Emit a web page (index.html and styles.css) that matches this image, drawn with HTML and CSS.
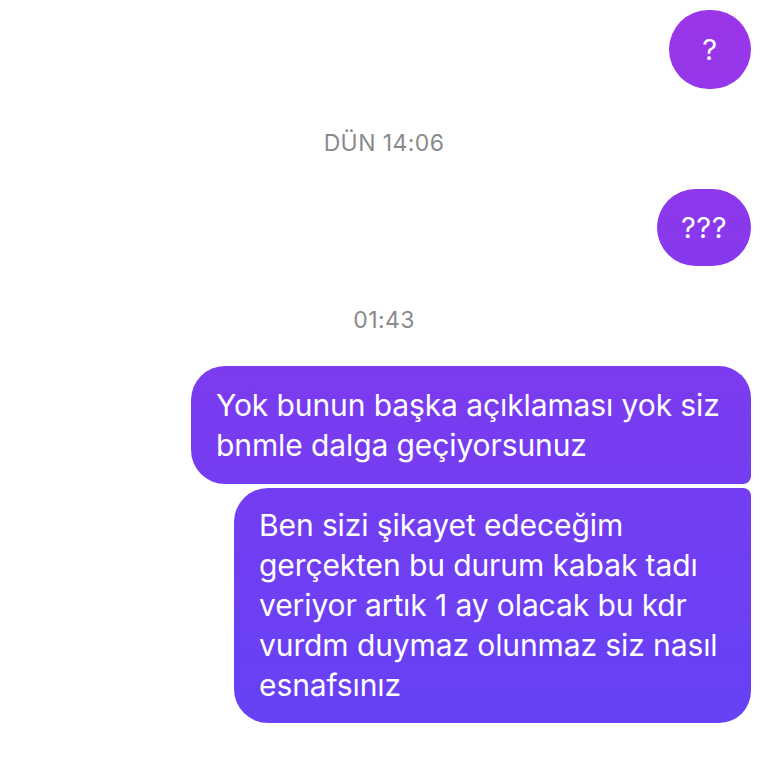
FILE: index.html
```html
<!DOCTYPE html>
<html lang="tr">
<head>
<meta charset="utf-8">
<link rel="stylesheet" href="styles.css">
</head>
<body>
<main class="thread">
  <div class="bubble round q1">?</div>
  <div class="stamp">DÜN 14:06</div>
  <div class="bubble round q3">???</div>
  <div class="stamp">01:43</div>
  <div class="group">
    <div class="bubble text first">Yok bunun başka açıklaması yok siz<br>bnmle dalga geçiyorsunuz</div>
    <div class="bubble text last">Ben sizi şikayet edeceğim<br>gerçekten bu durum kabak tadı<br>veriyor artık 1 ay olacak bu kdr<br>vurdm duymaz olunmaz siz nasıl<br>esnafsınız</div>
  </div>
</main>
</body>
</html>
```

FILE: styles.css
```css
html, body {
  margin: 0;
  padding: 0;
  background: #ffffff;
}
body {
  font-family: "Inter", "Roboto", "Liberation Sans", sans-serif;
  width: 768px;
  height: 768px;
  overflow: hidden;
}
.thread {
  display: flex;
  flex-direction: column;
  align-items: flex-end;
  padding: 10px 0 0 0;
}
.bubble {
  color: #ffffff;
  background: linear-gradient(180deg, #9c35e8 0px, #8a38ec 230px, #783cf0 420px, #6741f5 720px);
  background-attachment: fixed;
  box-sizing: border-box;
  margin-right: 17px;
}
.round {
  display: flex;
  align-items: center;
  justify-content: center;
  border-radius: 40px;
  font-size: 29px;
  letter-spacing: 0.5px;
}
.q1 {
  width: 82px;
  height: 79px;
}
.q3 {
  width: 94px;
  height: 77px;
}
.stamp {
  align-self: center;
  margin: 42px 0 34px;
  line-height: 24px;
  font-size: 23px;
  color: #8a8a8e;
  letter-spacing: 0.4px;
}
.group {
  display: flex;
  flex-direction: column;
  align-items: flex-end;
  gap: 4px;
}
.text {
  font-size: 30px;
  line-height: 40px;
  white-space: nowrap;
  letter-spacing: -0.1px;
}
.first {
  width: 560px;
  padding: 19px 25px;
  border-radius: 34px 32px 8px 34px;
}
.last {
  width: 517px;
  padding: 17px 25px 18px;
  border-radius: 34px 8px 32px 34px;
}
```
